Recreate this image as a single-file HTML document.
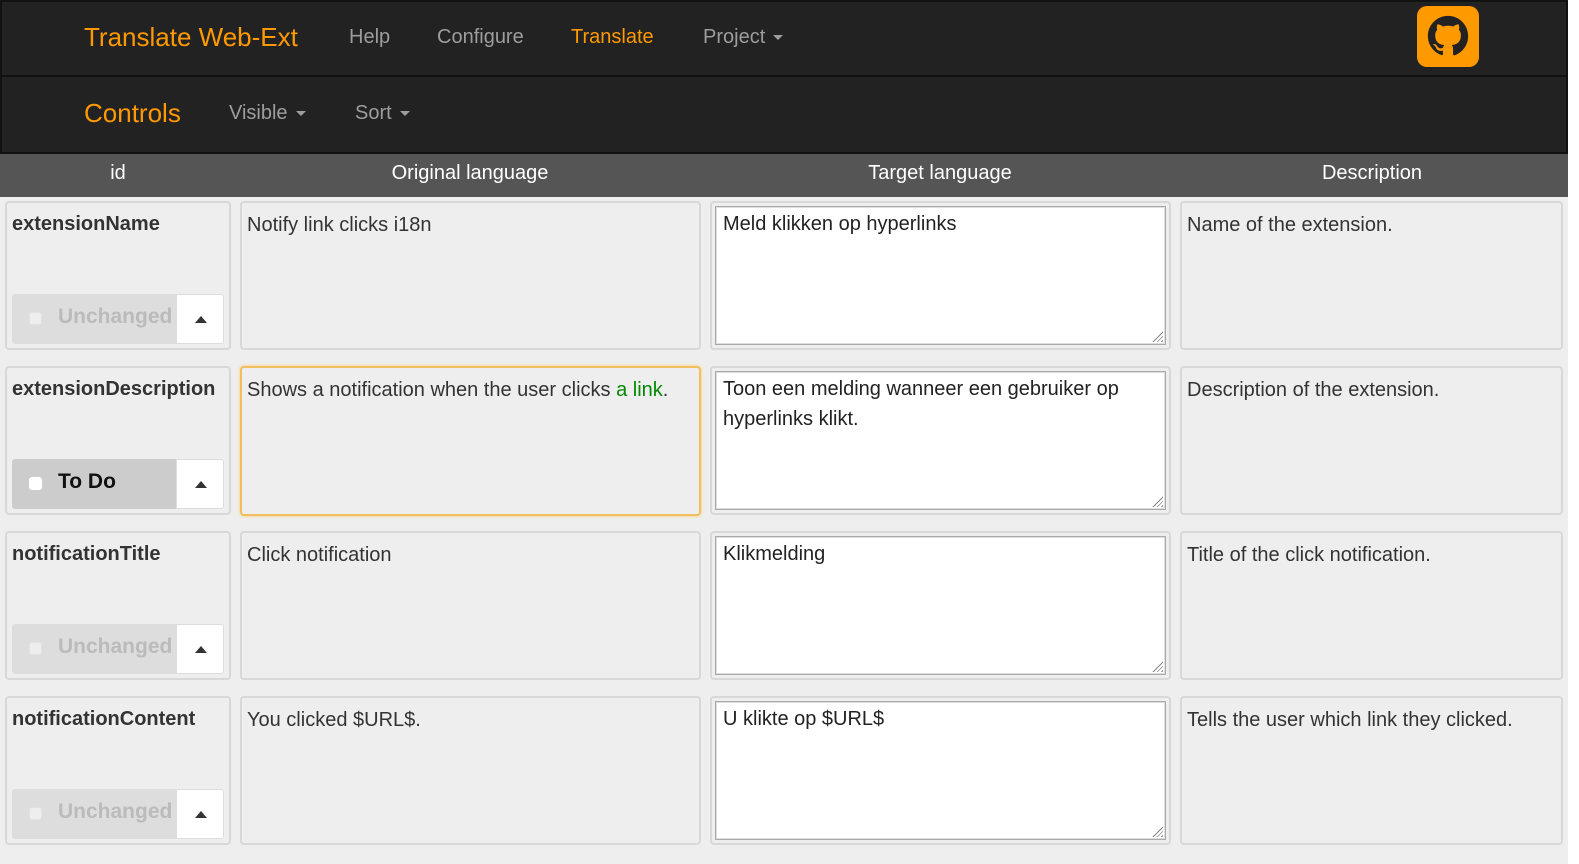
<!DOCTYPE html>
<html><head><meta charset="utf-8"><style>
*{box-sizing:border-box;margin:0;padding:0}
body{width:1579px;height:864px;background:#fff;font-family:"Liberation Sans",Arial,sans-serif;position:relative;overflow:hidden}
.nav{position:absolute;left:0;width:1568px;background:#222;border:2px solid #111}
.a{position:absolute;font-size:20px;color:#9d9d9d;white-space:nowrap}
.o{color:#f90}
.car{display:inline-block;width:0;height:0;border-left:5px solid transparent;border-right:5px solid transparent;border-top:5px solid #9d9d9d;vertical-align:middle;margin-left:8px}
.hdr{position:absolute;left:0;top:154px;width:1568px;height:43px;background:#555}
.h{position:absolute;top:162px;color:#fff;font-size:20px;transform:translateX(-50%)}
.bg{position:absolute;left:0;top:197px;width:1568px;height:667px;background:#eee}
.card{position:absolute;background:#eee;border:2px solid #d8d8d8;border-radius:4px;font-size:20px;color:#333;padding:7px 5px;line-height:30px}
.id{font-weight:bold;padding-top:6px}
.ta{position:absolute;background:#fff;border:1px solid #a9a9a9;box-shadow:inset 0 0 0 1px #ddd;font-size:20px;color:#222;padding:2px 7px;line-height:30px}
.grip{position:absolute;right:2px;bottom:2px;width:11px;height:11px;background:repeating-linear-gradient(135deg,transparent 0 2px,#888 2px 3px);clip-path:polygon(100% 0,100% 100%,0 100%)}
.btn{position:absolute;height:50px;border-radius:3px;overflow:hidden}
.bl{position:absolute;left:0;top:0;width:164px;height:50px;background:#ddd}
.bl .cb{position:absolute;left:17px;top:18px;width:13px;height:13px;border-radius:3px;background:#eee;border:1px solid #e2e2e2}
.bl span{position:absolute;left:46px;top:11px;font-size:21px;font-weight:bold;color:#bbb}
.br{position:absolute;left:164px;top:0;width:48px;height:50px;background:#fff;border:1px solid #ddd;border-radius:0 3px 3px 0}
.br i{position:absolute;left:18px;top:21px;border-left:6px solid transparent;border-right:6px solid transparent;border-bottom:7px solid #333}
</style></head><body>
<div class="nav" style="top:0;height:77px"></div>
<div class="nav" style="top:75px;height:79px"></div>
<div class="a o" style="left:84px;top:22px;font-size:26px">Translate Web-Ext</div>
<div class="a" style="left:349px;top:26px">Help</div>
<div class="a" style="left:437px;top:26px">Configure</div>
<div class="a o" style="left:571px;top:26px">Translate</div>
<div class="a" style="left:703px;top:26px">Project<span class="car"></span></div>
<div style="position:absolute;left:1417px;top:6px;width:62px;height:61px;background:#f90;border-radius:10px">
<svg style="position:absolute;left:10px;top:9px" width="42" height="42" viewBox="0 0 24 24"><path fill="#222" d="M12 .5C5.65.5.5 5.65.5 12c0 5.08 3.290 9.39 7.86 10.91.58.11.79-.25.79-.56v-2c-3.2.7-3.87-1.36-3.87-1.36-.52-1.33-1.28-1.69-1.28-1.690-1.04-.71.08-.7.08-.7 1.150.08 1.76 1.18 1.76 1.18 1.03 1.76 2.69 1.25 3.35.96.1-.74.4-1.25.73-1.54-2.55-.29-5.24-1.28-5.24-5.69 0-1.26.45-2.28 1.18-3.09-.12-.29-.51-1.46.11-3.04 0 0 .97-.31 3.17 1.18a11 11 0 0 1 5.77 0c2.2-1.49 3.17-1.18 3.17-1.18.63 1.58.23 2.75.11 3.04.74.81 1.18 1.83 1.18 3.09 0 4.42-2.69 5.39-5.25 5.68.41.36.78 1.06.78 2.14v3.17c0 .31.21.67.8.56A11.5 11.5 0 0 0 23.5 12C23.5 5.65 18.35.5 12 .5z"/></svg></div>
<div class="a o" style="left:84px;top:98px;font-size:26px">Controls</div>
<div class="a" style="left:229px;top:102px">Visible<span class="car"></span></div>
<div class="a" style="left:355px;top:102px">Sort<span class="car"></span></div>
<div class="hdr"></div>
<div class="h" style="left:118px">id</div>
<div class="h" style="left:470px">Original language</div>
<div class="h" style="left:940px">Target language</div>
<div class="h" style="left:1372px">Description</div>
<div class="bg"></div>

<!-- row 1 -->
<div class="card id" style="left:5px;top:201px;width:226px;height:149px">extensionName</div>
<div class="btn" style="left:12px;top:294px;width:212px"><div class="bl"><div class="cb"></div><span>Unchanged</span></div><div class="br"><i></i></div></div>
<div class="card" style="left:240px;top:201px;width:461px;height:149px">Notify link clicks i18n</div>
<div class="card" style="left:710px;top:201px;width:461px;height:149px"></div>
<div class="ta" style="left:715px;top:206px;width:451px;height:139px">Meld klikken op hyperlinks<div class="grip"></div></div>
<div class="card" style="left:1180px;top:201px;width:383px;height:149px">Name of the extension.</div>

<!-- row 2 -->
<div class="card id" style="left:5px;top:366px;width:226px;height:149px">extensionDescription</div>
<div class="btn" style="left:12px;top:459px;width:212px"><div class="bl" style="background:#ccc"><div class="cb" style="background:#fff;border-color:#fff"></div><span style="color:#111">To Do</span></div><div class="br"><i></i></div></div>
<div class="card" style="left:240px;top:366px;width:461px;height:150px;border-color:#f0c060;box-shadow:0 0 3px #fc6">Shows a notification when the user clicks <span style="color:#080">a link</span>.</div>
<div class="card" style="left:710px;top:366px;width:461px;height:149px"></div>
<div class="ta" style="left:715px;top:371px;width:451px;height:139px">Toon een melding wanneer een gebruiker op hyperlinks klikt.<div class="grip"></div></div>
<div class="card" style="left:1180px;top:366px;width:383px;height:149px">Description of the extension.</div>

<!-- row 3 -->
<div class="card id" style="left:5px;top:531px;width:226px;height:149px">notificationTitle</div>
<div class="btn" style="left:12px;top:624px;width:212px"><div class="bl"><div class="cb"></div><span>Unchanged</span></div><div class="br"><i></i></div></div>
<div class="card" style="left:240px;top:531px;width:461px;height:149px">Click notification</div>
<div class="card" style="left:710px;top:531px;width:461px;height:149px"></div>
<div class="ta" style="left:715px;top:536px;width:451px;height:139px">Klikmelding<div class="grip"></div></div>
<div class="card" style="left:1180px;top:531px;width:383px;height:149px">Title of the click notification.</div>

<!-- row 4 -->
<div class="card id" style="left:5px;top:696px;width:226px;height:149px">notificationContent</div>
<div class="btn" style="left:12px;top:789px;width:212px"><div class="bl"><div class="cb"></div><span>Unchanged</span></div><div class="br"><i></i></div></div>
<div class="card" style="left:240px;top:696px;width:461px;height:149px">You clicked $URL$.</div>
<div class="card" style="left:710px;top:696px;width:461px;height:149px"></div>
<div class="ta" style="left:715px;top:701px;width:451px;height:139px">U klikte op $URL$<div class="grip"></div></div>
<div class="card" style="left:1180px;top:696px;width:383px;height:149px">Tells the user which link they clicked.</div>
</body></html>
